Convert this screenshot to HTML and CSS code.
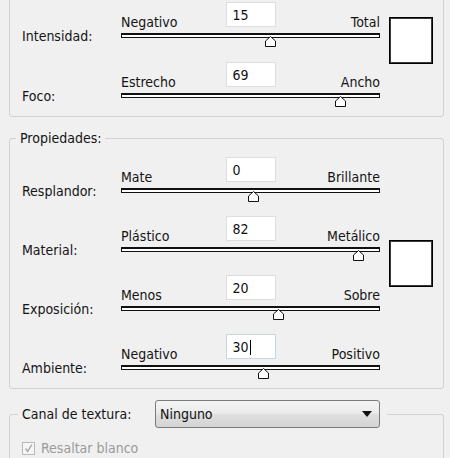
FILE: index.html
```html
<!DOCTYPE html>
<html lang="es">
<head>
<meta charset="utf-8">
<link rel="stylesheet" href="styles.css">
</head>
<body>
<div class="group g1">
  <div class="rows">
    <div class="row">
      <div class="rlabel">Intensidad:</div>
      <div class="slider">
        <div class="top"><span class="min">Negativo</span><span class="field">15</span><span class="max">Total</span></div>
        <div class="track"><svg class="thumb" style="left:57.9%" viewBox="0 0 11 11"><polygon points="0.5,10.5 0.5,5 5.5,0.5 10.5,5 10.5,10.5"/></svg></div>
      </div>
    </div>
    <div class="row">
      <div class="rlabel">Foco:</div>
      <div class="slider">
        <div class="top"><span class="min">Estrecho</span><span class="field">69</span><span class="max">Ancho</span></div>
        <div class="track"><svg class="thumb" style="left:84.9%" viewBox="0 0 11 11"><polygon points="0.5,10.5 0.5,5 5.5,0.5 10.5,5 10.5,10.5"/></svg></div>
      </div>
    </div>
  </div>
  <div class="swatch"></div>
</div>

<fieldset class="group g2">
  <legend>Propiedades:</legend>
  <div class="body">
    <div class="rows">
      <div class="row">
        <div class="rlabel">Resplandor:</div>
        <div class="slider">
          <div class="top"><span class="min">Mate</span><span class="field">0</span><span class="max">Brillante</span></div>
          <div class="track"><svg class="thumb" style="left:51%" viewBox="0 0 11 11"><polygon points="0.5,10.5 0.5,5 5.5,0.5 10.5,5 10.5,10.5"/></svg></div>
        </div>
      </div>
      <div class="row">
        <div class="rlabel">Material:</div>
        <div class="slider">
          <div class="top"><span class="min">Plástico</span><span class="field">82</span><span class="max">Metálico</span></div>
          <div class="track"><svg class="thumb" style="left:91.9%" viewBox="0 0 11 11"><polygon points="0.5,10.5 0.5,5 5.5,0.5 10.5,5 10.5,10.5"/></svg></div>
        </div>
      </div>
      <div class="row">
        <div class="rlabel">Exposición:</div>
        <div class="slider">
          <div class="top"><span class="min">Menos</span><span class="field">20</span><span class="max">Sobre</span></div>
          <div class="track"><svg class="thumb" style="left:61%" viewBox="0 0 11 11"><polygon points="0.5,10.5 0.5,5 5.5,0.5 10.5,5 10.5,10.5"/></svg></div>
        </div>
      </div>
      <div class="row">
        <div class="rlabel">Ambiente:</div>
        <div class="slider">
          <div class="top"><span class="min">Negativo</span><span class="field focused">30<span class="caret"></span></span><span class="max">Positivo</span></div>
          <div class="track"><svg class="thumb" style="left:55.2%" viewBox="0 0 11 11"><polygon points="0.5,10.5 0.5,5 5.5,0.5 10.5,5 10.5,10.5"/></svg></div>
        </div>
      </div>
    </div>
    <div class="swatch"></div>
  </div>
</fieldset>

<fieldset class="group g3">
  <legend>
    <span class="tlabel">Canal de textura:</span>
    <span class="select"><span class="seltext">Ninguno</span><svg class="arrow" viewBox="0 0 10 6"><polygon points="0,0 10,0 5,6"/></svg></span>
  </legend>
  <div class="body">
    <label class="checkrow">
      <span class="checkbox"><svg viewBox="0 0 13 13"><polyline points="3,6.5 5.5,10 10.5,2"/></svg></span>
      <span class="checktext">Resaltar blanco</span>
    </label>
  </div>
</fieldset>
</body>
</html>
```

FILE: styles.css
```css
html, body {
  margin: 0;
  padding: 0;
}
body {
  background: #f0f0f0;
  font-family: "DejaVu Sans Condensed", "DejaVu Sans", sans-serif;
  font-size: 14px;
  color: #141414;
  width: 450px;
  height: 458px;
  overflow: hidden;
}
.group {
  margin: 0 0 0 9px;
  width: 435px;
  box-sizing: border-box;
  border: 1px solid #d2d2d2;
  border-radius: 3px;
}
.g1 {
  margin-top: -10px;
  padding: 11px 0 18px 12px;
  display: flex;
  align-items: flex-start;
}
fieldset.group {
  padding: 0;
  min-width: 0;
}
fieldset legend {
  margin-left: 6px;
  padding: 0 4px;
  line-height: 16px;
}
.g2 {
  margin-top: 13px;
}
.g2 .body {
  padding: 11px 0 18px 12px;
  display: flex;
  align-items: center;
}
.rows {
  display: flex;
  flex-direction: column;
  width: 358px;
}
.g1 .rows { gap: 24px; }
.g2 .rows { gap: 23px; }
.row {
  display: flex;
  height: 36px;
}
.rlabel {
  width: 99px;
  box-sizing: border-box;
  padding-top: 26px;
  line-height: 16px;
}
.slider {
  width: 259px;
  display: flex;
  flex-direction: column;
}
.top {
  height: 31px;
  display: grid;
  grid-template-columns: 1fr 50px 1fr;
  align-items: end;
}
.min, .max {
  line-height: 16px;
  padding-bottom: 3px;
}
.max {
  justify-self: end;
}
.field {
  align-self: start;
  height: 25px;
  box-sizing: border-box;
  background: #fff;
  border: 1px solid #dedede;
  padding: 1px 0 0 6px;
  line-height: 22px;
  color: #111;
}
.field.focused {
  border-color: #c5d6e6;
}
.caret {
  display: inline-block;
  width: 1px;
  height: 15px;
  background: #000;
  vertical-align: -3px;
  margin-left: 1px;
}
.track {
  position: relative;
  height: 5px;
  box-sizing: border-box;
  border: 1px solid #111;
  border-top-width: 2px;
  background: #fff;
}
.thumb {
  position: absolute;
  top: 1px;
  width: 11px;
  height: 11px;
  margin-left: -5.5px;
  fill: #fff;
  stroke: #111;
  stroke-width: 1;
}
.swatch {
  flex: none;
  width: 44px;
  height: 47px;
  box-sizing: border-box;
  margin-left: 9px;
  border: 1px solid #000;
  box-shadow: inset 0 0 0 1px #3a3a3a;
  background: #fff;
}
.g1 .swatch {
  margin-top: 15px;
}
.g3 {
  margin-top: 11px;
  height: 80px;
}
.g3 legend {
  margin-left: 8px;
  padding: 0 7px 0 4px;
  display: flex;
  align-items: center;
}
.tlabel {
  width: 133px;
}
.select {
  width: 225px;
  height: 28px;
  box-sizing: border-box;
  border: 1px solid #7b7b7b;
  border-radius: 3px;
  background: linear-gradient(#f4f4f4, #ebebeb 45%, #dedede 55%, #d4d4d4);
  display: flex;
  align-items: center;
  justify-content: space-between;
  padding: 0 7px 0 4px;
  color: #111;
}
.arrow {
  width: 10px;
  height: 6px;
  fill: #111;
}
.g3 .body {
  padding: 12px 0 0 12px;
}
.checkrow {
  display: flex;
  align-items: center;
  gap: 6px;
  color: #9a9a9a;
}
.checkbox {
  width: 13px;
  height: 13px;
  box-sizing: border-box;
  border: 1px solid #b8b8b8;
  background: #f6f6f6;
  display: flex;
}
.checkbox svg {
  width: 11px;
  height: 11px;
  fill: none;
  stroke: #a8a8a8;
  stroke-width: 1.6;
}
```
